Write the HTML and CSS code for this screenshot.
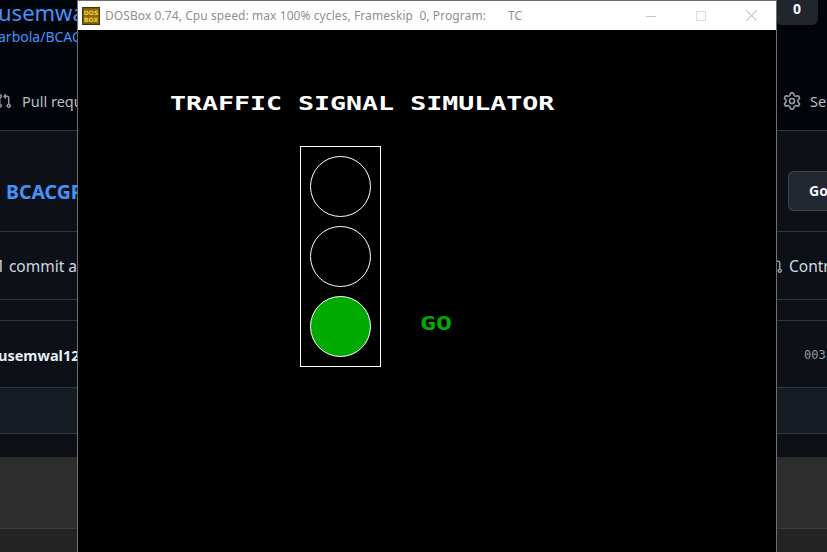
FILE: index.html
```html
<!DOCTYPE html>
<html>
<head>
<meta charset="utf-8">
<link rel="stylesheet" href="styles.css">
</head>
<body>
<div class="page">
  <div class="gh">
    <div class="hdr">
      <div class="hdr-left">
        <div class="owner">usemwal12</div>
        <div class="crumb">arbola/BCACGP</div>
      </div>
      <div class="notif">0</div>
    </div>
    <div class="row nav">
      <div class="left">
        <svg class="ico pr" viewBox="0 0 16 16" width="16" height="16"><path fill="#9198a1" d="M1.5 3.25a2.25 2.25 0 1 1 3 2.122v5.256a2.251 2.251 0 1 1-1.5 0V5.372A2.25 2.25 0 0 1 1.5 3.25Zm5.677-.177L9.573.677A.25.25 0 0 1 10 .854V2.5h1A2.5 2.5 0 0 1 13.5 5v5.628a2.251 2.251 0 1 1-1.5 0V5a1 1 0 0 0-1-1h-1v1.646a.25.25 0 0 1-.427.177L7.177 3.427a.25.25 0 0 1 0-.354ZM3.75 2.5a.75.75 0 1 0 0 1.5.75.75 0 0 0 0-1.5Zm0 9.5a.75.75 0 1 0 0 1.5.75.75 0 0 0 0-1.5Zm8.25.75a.75.75 0 1 0 1.5 0 .75.75 0 0 0-1.5 0Z"/></svg>
        <span class="navtxt">Pull requests</span>
      </div>
      <div class="right r-set">
        <svg class="ico gear" viewBox="0 0 16 16" width="18" height="18"><path fill="#9198a1" d="M8 0a8.2 8.2 0 0 1 .701.031C9.444.095 9.990.645 10.160 1.290l.288 1.107c.018.066.079.158.212.224.231.114.454.243.668.386.123.082.233.090.299.071l1.103-.303c.644-.176 1.392.021 1.820.630.270.385.506.792.704 1.218.315.675.111 1.422-.364 1.891l-.814.806c-.049.048-.098.147-.088.294.016.257.016.515 0 .772-.010.147.038.246.088.294l.814.806c.475.469.679 1.216.364 1.891a7.977 7.977 0 0 1-.704 1.217c-.428.610-1.176.807-1.820.630l-1.102-.302c-.067-.019-.177-.011-.300.071a5.909 5.909 0 0 1-.668.386c-.133.066-.194.158-.211.224l-.290 1.106c-.168.646-.715 1.196-1.458 1.260a8.006 8.006 0 0 1-1.402 0c-.743-.064-1.289-.614-1.458-1.260l-.289-1.106c-.018-.066-.079-.158-.212-.224a5.738 5.738 0 0 1-.668-.386c-.123-.082-.233-.090-.299-.071l-1.103.303c-.644.176-1.392-.021-1.820-.630a8.120 8.120 0 0 1-.704-1.218c-.315-.675-.111-1.422.363-1.891l.815-.806c.050-.048.098-.147.088-.294a6.214 6.214 0 0 1 0-.772c.010-.147-.038-.246-.088-.294l-.815-.806C.635 6.045.431 5.298.746 4.623a7.920 7.920 0 0 1 .704-1.217c.428-.610 1.176-.807 1.820-.630l1.102.302c.067.019.177.011.300-.071.214-.143.437-.272.668-.386.133-.066.194-.158.211-.224l.290-1.106C6.009.645 6.556.095 7.299.030 7.530.010 7.764 0 8 0Zm-.571 1.525c-.036.003-.108.036-.137.146l-.289 1.105c-.147.561-.549.967-.998 1.189-.173.086-.340.183-.500.290-.417.278-.970.423-1.529.270l-1.103-.303c-.109-.030-.175.016-.195.045-.220.312-.412.644-.573.990-.014.031-.021.110.059.190l.815.806c.411.406.562.957.530 1.456a4.709 4.709 0 0 0 0 .582c.032.499-.119 1.050-.530 1.456l-.815.806c-.081.080-.073.159-.059.190.162.346.353.677.573.989.020.030.085.076.195.046l1.102-.303c.560-.153 1.113-.008 1.530.270.161.107.328.204.501.290.447.222.850.629.997 1.189l.289 1.105c.029.109.101.143.137.146a6.600 6.600 0 0 0 1.142 0c.036-.003.108-.036.137-.146l.289-1.105c.147-.561.549-.967.998-1.189.173-.086.340-.183.500-.290.417-.278.970-.423 1.529-.270l1.103.303c.109.029.175-.016.195-.045.220-.313.411-.644.573-.990.014-.031.021-.110-.059-.190l-.815-.806c-.411-.406-.562-.957-.530-1.456a4.709 4.709 0 0 0 0-.582c-.032-.499.119-1.050.530-1.456l.815-.806c.081-.080.073-.159.059-.190a6.464 6.464 0 0 0-.573-.989c-.020-.030-.085-.076-.195-.046l-1.102.303c-.560.153-1.113.008-1.530-.270a4.440 4.440 0 0 0-.501-.290c-.447-.222-.850-.629-.997-1.189l-.289-1.105c-.029-.110-.101-.143-.137-.146a6.600 6.600 0 0 0-1.142 0ZM11 8a3 3 0 1 1-6 0 3 3 0 0 1 6 0ZM9.500 8a1.500 1.500 0 1 0-3.001.001A1.500 1.500 0 0 0 9.500 8Z"/></svg>
        <span class="navtxt">Settings</span>
      </div>
    </div>
    <div class="row repo">
      <div class="left"><span class="reponame">BCACGP</span></div>
      <div class="right r-go"><div class="gobtn">Go to file</div></div>
    </div>
    <div class="row commit">
      <div class="left"><span class="committxt">1 commit ahead</span></div>
      <div class="right r-cont">
        <svg class="ico" viewBox="0 0 16 16" width="16" height="16"><path fill="#9198a1" d="M1.5 3.25a2.25 2.25 0 1 1 3 2.122v5.256a2.251 2.251 0 1 1-1.5 0V5.372A2.25 2.25 0 0 1 1.5 3.25Zm5.677-.177L9.573.677A.25.25 0 0 1 10 .854V2.5h1A2.5 2.5 0 0 1 13.5 5v5.628a2.251 2.251 0 1 1-1.5 0V5a1 1 0 0 0-1-1h-1v1.646a.25.25 0 0 1-.427.177L7.177 3.427a.25.25 0 0 1 0-.354ZM3.75 2.5a.75.75 0 1 0 0 1.5.75.75 0 0 0 0-1.5Zm0 9.5a.75.75 0 1 0 0 1.5.75.75 0 0 0 0-1.5Zm8.25.75a.75.75 0 1 0 1.5 0 .75.75 0 0 0-1.5 0Z"/></svg>
        <span class="committxt">Contribute</span>
      </div>
    </div>
    <div class="row gap"></div>
    <div class="row file">
      <div class="left"><span class="author">usemwal12</span></div>
      <div class="right r-sha"><span class="sha">003a1f2</span></div>
    </div>
    <div class="row stripe"></div>
    <div class="band dark"></div>
    <div class="band grey"></div>
    <div class="band bottom"></div>
  </div>

  <div class="dosbox">
    <div class="titlebar">
      <svg class="appicon" viewBox="0 0 18 18" width="18" height="18">
        <rect x="0.5" y="0.5" width="17" height="17" fill="#7c5a0c" stroke="#4a3506"/>
        <rect x="2" y="2" width="14" height="14" fill="#8f6a12"/>
        <text x="9" y="8" text-anchor="middle" class="icotxt">DOS</text>
        <text x="9" y="15" text-anchor="middle" class="icotxt">BOX</text>
      </svg>
      <span class="wtitle">DOSBox 0.74, Cpu speed: max 100% cycles, Frameskip  0, Program:</span>
      <span class="wtitle prog">TC</span>
      <div class="controls">
        <div class="ctl"><svg viewBox="0 0 10 10" width="10" height="10"><path d="M0 5.5h10" stroke="#c4c4c4" stroke-width="1"/></svg></div>
        <div class="ctl"><svg viewBox="0 0 10 10" width="10" height="10"><rect x="0.5" y="0.5" width="9" height="9" fill="none" stroke="#dcdcdc" stroke-width="1"/></svg></div>
        <div class="ctl"><svg viewBox="0 0 10 10" width="11" height="11"><path d="M0 0L10 10M10 0L0 10" stroke="#c4c4c4" stroke-width="1"/></svg></div>
      </div>
    </div>
    <div class="screen">
      <svg class="dos" viewBox="0 0 698 523" width="698" height="523">
        <text class="pix" transform="scale(1.4 1)" x="65.7" y="81" fill="#ffffff">TRAFFIC SIGNAL SIMULATOR</text>
        <rect x="222.5" y="117.5" width="80" height="220" fill="none" stroke="#ffffff" stroke-width="1"/>
        <circle cx="262.5" cy="157.5" r="30" fill="none" stroke="#ffffff" stroke-width="1"/>
        <circle cx="262.5" cy="227.5" r="30" fill="none" stroke="#ffffff" stroke-width="1"/>
        <circle cx="262.5" cy="297.5" r="30" fill="#00aa00" stroke="#ffffff" stroke-width="1"/>
        <text class="pix" transform="scale(1.4 1)" x="244.3" y="301" fill="#00aa00">GO</text>
      </svg>
    </div>
  </div>
</div>
</body>
</html>
```

FILE: styles.css
```css
html, body {
  margin: 0;
  padding: 0;
  background: #0d1117;
}
body {
  width: 827px;
  height: 552px;
  overflow: hidden;
  font-family: "Noto Sans", "Liberation Sans", sans-serif;
}
.page {
  position: relative;
  width: 827px;
  height: 552px;
  overflow: hidden;
}
.gh {
  display: flex;
  flex-direction: column;
  width: 827px;
  height: 552px;
}
.hdr {
  height: 60px;
  display: flex;
  justify-content: space-between;
  align-items: flex-start;
  box-sizing: border-box;
  background: #010409;
}
.hdr-left {
  display: flex;
  flex-direction: column;
  overflow: hidden;
  white-space: nowrap;
}
.owner {
  color: #4493f8;
  font-size: 22px;
  line-height: 24px;
  margin-left: -2px;
}
.crumb {
  color: #4493f8;
  font-size: 14px;
  line-height: 20px;
  margin-top: 3px;
  margin-left: -2px;
}
.notif {
  width: 42px;
  height: 25px;
  margin-right: 9px;
  background: #21262d;
  border-radius: 0 0 6px 6px;
  color: #f0f6fc;
  font-weight: 700;
  font-size: 14px;
  line-height: 17px;
  text-align: center;
}
.row {
  display: flex;
  justify-content: space-between;
  align-items: flex-start;
  box-sizing: border-box;
  border-bottom: 1px solid #30363d;
  flex: none;
}
.left {
  display: flex;
  align-items: center;
  white-space: nowrap;
  overflow: hidden;
  flex: 1;
}
.right {
  display: flex;
  align-items: center;
  white-space: nowrap;
  overflow: hidden;
  flex: none;
}
.ico { flex: none; }
.nav {
  height: 71px;
  padding-top: 31px;
  background: #010409;
}
.nav .left, .nav .right { height: 20px; }
.pr { margin-left: -4px; margin-right: 10px; }
.navtxt {
  color: #b7bfc8;
  font-size: 14.5px;
  line-height: 20px;
}
.r-set { width: 44px; }
.gear { margin-right: 9px; }
.repo {
  height: 101px;
  padding-top: 40px;
}
.reponame {
  margin-top: 10px;
  margin-left: 6px;
  color: #4493f8;
  font-weight: 700;
  font-size: 19.5px;
  line-height: 22px;
}
.r-go { width: 39px; }
.gobtn {
  height: 40px;
  box-sizing: border-box;
  padding: 0 14px 0 20px;
  background: #212830;
  border: 1px solid #3d444d;
  border-right: none;
  border-radius: 6px 0 0 6px;
  color: #f0f6fc;
  font-weight: 700;
  font-size: 14px;
  line-height: 38px;
}
.commit {
  height: 68px;
  padding-top: 24px;
}
.committxt {
  color: #d1d7e0;
  font-size: 15.5px;
  line-height: 20px;
}
.commit .left .committxt { margin-left: -4px; }
.r-cont { width: 60px; }
.r-cont .ico { margin-right: 6px; }
.gap { height: 21px; }
.file {
  height: 67px;
  padding-top: 24px;
}
.author {
  margin-left: -2px;
  color: #e6edf3;
  font-weight: 700;
  font-size: 14.5px;
  line-height: 20px;
}
.r-sha { width: 23px; height: 20px; }
.sha {
  color: #9198a1;
  font-family: "DejaVu Sans Mono", "Liberation Mono", monospace;
  font-size: 12px;
  line-height: 20px;
}
.stripe {
  height: 46px;
  background: #151b23;
}
.band { flex: none; }
.dark { height: 23px; background: #0d1117; }
.grey {
  height: 72px;
  background: #2d2d2d;
  border-bottom: 1px solid #3c3c3c;
  box-sizing: border-box;
}
.bottom { flex: 1; background: #232323; }

/* DOSBox window */
.dosbox {
  position: absolute;
  left: 77px;
  top: 0;
  width: 700px;
  height: 560px;
  box-sizing: border-box;
  border: 1px solid #6f6f6f;
  border-bottom: none;
  background: #000;
  display: flex;
  flex-direction: column;
}
.titlebar {
  height: 29px;
  flex: none;
  background: #ffffff;
  display: flex;
  align-items: center;
  padding-left: 4px;
}
.appicon { flex: none; margin-right: 5px; }
.icotxt {
  font-family: "DejaVu Sans", sans-serif;
  font-size: 6px;
  font-weight: 700;
  fill: #e8d23a;
}
.wtitle {
  color: #8f8f8f;
  font-family: "Noto Sans", "Liberation Sans", sans-serif;
  font-size: 12px;
  letter-spacing: 0.08px;
  white-space: pre;
  line-height: 28px;
}
.prog { margin-left: 22px; }
.controls {
  margin-left: auto;
  display: flex;
  height: 28px;
}
.ctl {
  width: 50px;
  height: 28px;
  display: flex;
  align-items: center;
  justify-content: center;
}
.screen {
  flex: 1;
  background: #000;
}
.dos { display: block; margin-top: -1px; }
.pix {
  font-family: "DejaVu Sans Mono", "Liberation Mono", monospace;
  font-weight: 700;
  font-size: 19px;
}
```
